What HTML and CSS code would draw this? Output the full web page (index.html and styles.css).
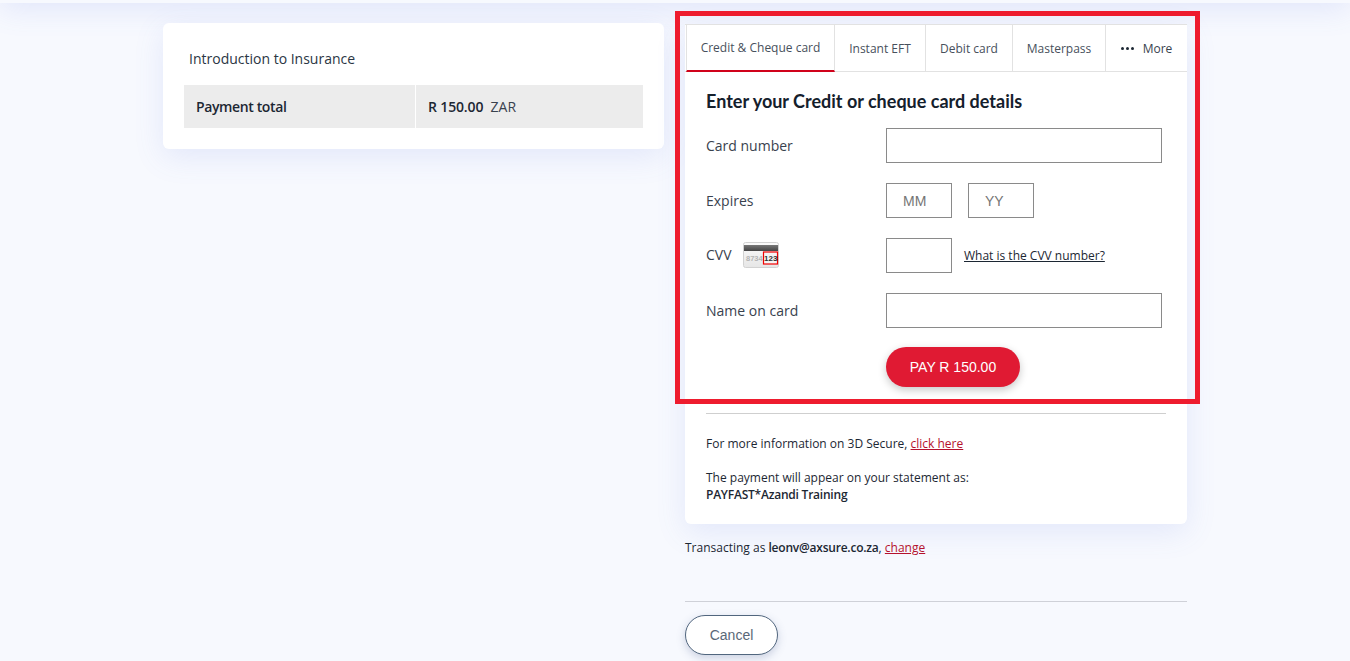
FILE: index.html
```html
<html>
<head>
    <link rel="stylesheet" href="styles.css">
</head>
<body>
<div class="topBar"></div>

<div class="page">
    <div class="summaryCard">
        <div class="itemName">Introduction to Insurance</div>
        <div class="totalRow">
            <div class="totalLabel">Payment total</div>
            <div class="totalValue"><b>R 150.00</b>&nbsp; ZAR</div>
        </div>
    </div>

    <div class="payCol">
        <div class="payCard">
            <div class="tabs">
                <div class="tab tabActive">Credit &amp; Cheque card</div>
                <div class="tab tabEft">Instant EFT</div>
                <div class="tab tabDebit">Debit card</div>
                <div class="tab tabMaster">Masterpass</div>
                <div class="tab tabMore">
                    <span class="dots"><i></i><i></i><i></i></span>
                    More
                </div>
            </div>

            <div class="formBox">
                <h3>Enter your Credit or cheque card details</h3>

                <div class="formRow">
                    <label class="rowLabel" for="cardnum">Card number</label>
                    <input class="field fieldWide" type="text" id="cardnum">
                </div>
                <div class="formRow">
                    <label class="rowLabel" for="mm">Expires</label>
                    <input class="field fieldShort" type="text" id="mm" placeholder="MM">
                    <input class="field fieldShort" type="text" id="yy" placeholder="YY">
                </div>
                <div class="formRow">
                    <label class="rowLabel cvvLabel" for="cvv">CVV
                        <svg class="cvvIcon" width="36" height="26" viewBox="0 0 36 26">
                            <defs>
                                <linearGradient id="cardFill" x1="0" y1="0" x2="0" y2="1">
                                    <stop offset="0" stop-color="#fbfbfb"/>
                                    <stop offset="1" stop-color="#e6e6e6"/>
                                </linearGradient>
                                <linearGradient id="stripeFill" x1="0" y1="0" x2="0" y2="1">
                                    <stop offset="0" stop-color="#777777"/>
                                    <stop offset="1" stop-color="#444444"/>
                                </linearGradient>
                            </defs>
                            <rect x="0.5" y="0.5" width="35" height="25" rx="2" fill="url(#cardFill)" stroke="#d2d2d2"/>
                            <rect x="1" y="3" width="34" height="6" fill="url(#stripeFill)"/>
                            <text x="3" y="19" class="cvvGrey">8734</text>
                            <rect x="20.5" y="10" width="14" height="12" fill="#f4f4f4" stroke="#f00000" stroke-width="1.2"/>
                            <text x="21" y="19" class="cvvDark">123</text>
                        </svg>
                    </label>
                    <input class="field fieldShort" type="text" id="cvv">
                    <a class="cvvLink" href="#">What is the CVV number?</a>
                </div>
                <div class="formRow">
                    <label class="rowLabel" for="cardname">Name on card</label>
                    <input class="field fieldWide" type="text" id="cardname">
                </div>

                <div class="payRow">
                    <button class="payBtn">PAY R 150.00</button>
                </div>

                <hr class="line">

                <p class="note">For more information on 3D Secure, <a class="redLink" href="#">click here</a></p>
                <p class="note noteGap">The payment will appear on your statement as:<br><b>PAYFAST*Azandi Training</b></p>
            </div>
        </div>

        <p class="transacting">Transacting as <b>leonv@axsure.co.za</b>, <a class="redLink" href="#">change</a></p>

        <hr class="bottomLine">

        <button class="cancelBtn">Cancel</button>
    </div>
</div>

<div class="redBox"></div>
</body>
</html>
```

FILE: styles.css
```css
html, body {
    margin: 0;
    height: 661px;
    overflow: hidden;
}
body {
    background: #f7f9fe;
    font-family: "Open Sans", sans-serif;
    color: #1c2733;
    position: relative;
}
/* header sits mostly above the window, only its shadow and 3px show */
.topBar {
    height: 63px;
    margin-top: -60px;
    background: #f7f9fe;
    box-shadow: 0 6px 30px rgba(90, 115, 225, 0.14);
}

.page {
    display: flex;
    align-items: flex-start;
    gap: 21px;
    padding: 20px 0 0 163px;
}

/* left card */
.summaryCard {
    width: 501px;
    height: 126px;
    box-sizing: border-box;
    padding: 26px 21px 0;
    background: #ffffff;
    border-radius: 6px;
    box-shadow: 0 8px 30px rgba(90, 115, 225, 0.13);
}
.itemName {
    font-size: 14px;
    line-height: 20px;
    padding-left: 5px;
    margin-bottom: 16px;
    color: #2b3644;
}
.totalRow {
    display: flex;
    height: 43px;
    line-height: 43px;
    font-size: 14px;
    gap: 1px;
}
.totalLabel {
    width: 219px;
    padding-left: 12px;
    background: #ececec;
    font-weight: 600;
    letter-spacing: -0.38px;
}
.totalValue {
    flex: 1;
    padding-left: 12px;
    background: #ececec;
    color: #39424e;
}
.totalValue b {
    font-weight: 600;
    color: #1c2733;
    letter-spacing: -0.15px;
}

/* right column */
.payCol {
    width: 502px;
    margin-top: 1px;
}
.payCard {
    height: 500px;
    background: #ffffff;
    border-radius: 0 0 6px 6px;
    box-shadow: 0 8px 30px rgba(90, 115, 225, 0.13);
}
.tabs {
    display: flex;
    height: 48px;
    box-sizing: border-box;
    padding-left: 1px;
    border-top: 1px solid #e2e2e2;
    border-bottom: 1px solid #e2e2e2;
    font-size: 12px;
    color: #47505c;
}
.tab {
    display: flex;
    align-items: center;
    justify-content: center;
    box-sizing: border-box;
    border-right: 1px solid #e2e2e2;
}
.tabActive {
    width: 149px;
    border-left: 1px solid #e2e2e2;
    border-bottom: 2px solid #d0021b;
    margin-bottom: -1px;
}
.tabEft { width: 91px; }
.tabDebit { width: 87px; }
.tabMaster { width: 93px; }
.tabMore {
    flex: 1;
    border-right: 0;
    gap: 9px;
    color: #39424e;
}
.dots {
    display: flex;
    gap: 2px;
}
.dots i {
    width: 3px;
    height: 3px;
    border-radius: 50%;
    background: #1c2733;
}

.formBox {
    padding: 17px 21px 0;
}
h3 {
    margin: 0 0 14px;
    font-family: Lato, sans-serif;
    font-size: 18px;
    line-height: 25px;
    font-weight: 700;
    color: #14202c;
}
.formRow {
    display: flex;
    align-items: center;
    height: 35px;
    margin-bottom: 20px;
}
.rowLabel {
    width: 180px;
    font-size: 14px;
    color: #39424e;
    display: flex;
    align-items: center;
}
.cvvLabel {
    margin-bottom: 2px;
}
.cvvIcon {
    margin-left: 11px;
}
.cvvGrey {
    font: bold 7.5px "Liberation Sans", sans-serif;
    fill: #b4b4b4;
}
.cvvDark {
    font: bold 8px "Liberation Sans", sans-serif;
    fill: #333333;
}
.field {
    height: 35px;
    box-sizing: border-box;
    border: 1px solid #8a8a8a;
    border-radius: 0;
    background: #ffffff;
    padding: 0 16px;
    font-family: "Liberation Sans", sans-serif;
    font-size: 14px;
}
.field::placeholder {
    color: #757575;
    opacity: 1;
}
.fieldWide { width: 276px; }
.fieldShort { width: 66px; margin-right: 16px; }
.cvvLink {
    margin-left: -4px;
    font-size: 12px;
    color: #1c2733;
}
.payRow {
    padding-left: 180px;
    margin-top: -1px;
}
.payBtn {
    width: 134px;
    height: 40px;
    border: 0;
    border-radius: 20px;
    background: #e01a33;
    color: #ffffff;
    font-family: "Liberation Sans", sans-serif;
    font-size: 14px;
    box-shadow: 0 3px 8px rgba(0, 0, 0, 0.22);
}
.line {
    width: 460px;
    margin: 26px 0 0;
    border: 0;
    border-top: 1px solid #cfcfcf;
}
.note {
    margin: 21px 0 0;
    font-size: 12px;
    line-height: 17px;
    color: #1c2733;
}
.noteGap {
    margin-top: 17px;
}
.note b, .transacting b {
    font-weight: 600;
    letter-spacing: -0.22px;
}
.redLink {
    color: #b5122e;
}
.transacting {
    margin: 15px 0 0;
    font-size: 12px;
    line-height: 17px;
}
.bottomLine {
    margin: 45px 0 0;
    border: 0;
    border-top: 1px solid #cfd1d8;
}
.cancelBtn {
    display: block;
    width: 93px;
    height: 40px;
    margin-top: 13px;
    border: 1px solid #51667e;
    border-radius: 20px;
    background: #ffffff;
    color: #5a6878;
    font-family: "Liberation Sans", sans-serif;
    font-size: 14px;
    box-shadow: 0 3px 8px rgba(70, 90, 140, 0.25);
}

/* annotation drawn over the form */
.redBox {
    position: absolute;
    left: 675px;
    top: 11px;
    width: 515px;
    height: 383px;
    border: 5px solid #ee1c2e;
}
```
